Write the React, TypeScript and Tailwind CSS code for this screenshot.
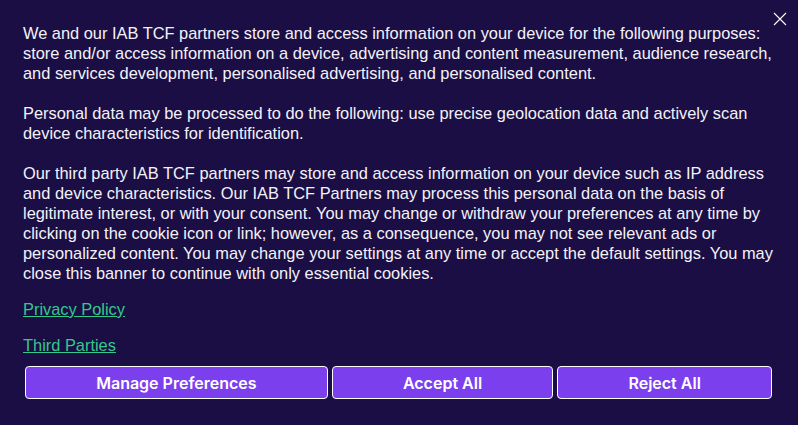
const paragraphs = [
  'We and our IAB TCF partners store and access information on your device for the following purposes: store and/or access information on a device, advertising and content measurement, audience research, and services development, personalised advertising, and personalised content.',
  'Personal data may be processed to do the following: use precise geolocation data and actively scan device characteristics for identification.',
  'Our third party IAB TCF partners may store and access information on your device such as IP address and device characteristics. Our IAB TCF Partners may process this personal data on the basis of legitimate interest, or with your consent. You may change or withdraw your preferences at any time by clicking on the cookie icon or link; however, as a consequence, you may not see relevant ads or personalized content. You may change your settings at any time or accept the default settings. You may close this banner to continue with only essential cookies.',
];

const buttons = ['Manage Preferences', 'Accept All', 'Reject All'];

export default function App() {
  return (
    <div
      className="relative w-[798px] h-[425px] bg-[#1a0e45] text-white overflow-hidden"
      style={{ fontFamily: '"Liberation Sans", Arial, sans-serif' }}
    >
      {/* close */}
      <button className="absolute top-[12px] left-[773px] w-[14px] h-[14px] text-white">
        <svg width="14" height="14" viewBox="0 0 14 14" fill="none" stroke="currentColor" strokeWidth="1.1">
          <path d="M1 1 L13 13 M13 1 L1 13" />
        </svg>
      </button>

      <div className="pl-[23px] pr-[10px] pt-[23px]">
        {paragraphs.map((text, i) => (
          <p key={i} className="text-[16.4px] leading-[20px] mb-[20px] text-[#f4f2f8]">
            {text}
          </p>
        ))}

        <div className="flex flex-col gap-[16px] text-[16.4px] leading-[20px] mt-[-4px]">
          <a href="#" className="text-[#34c98a] underline w-fit">Privacy Policy</a>
          <a href="#" className="text-[#34c98a] underline w-fit">Third Parties</a>
        </div>

        <div
          className="flex gap-[4px] mt-[11px] ml-[2px] w-[747px]"
          style={{ fontFamily: 'Inter, Roboto, sans-serif' }}
        >
          {buttons.map(label => (
            <button
              key={label}
              className="flex-auto h-[33px] px-4 rounded-[4px] border border-white bg-[#7b3fee] text-white text-[16px] font-semibold"
            >
              {label}
            </button>
          ))}
        </div>
      </div>
    </div>
  );
}
